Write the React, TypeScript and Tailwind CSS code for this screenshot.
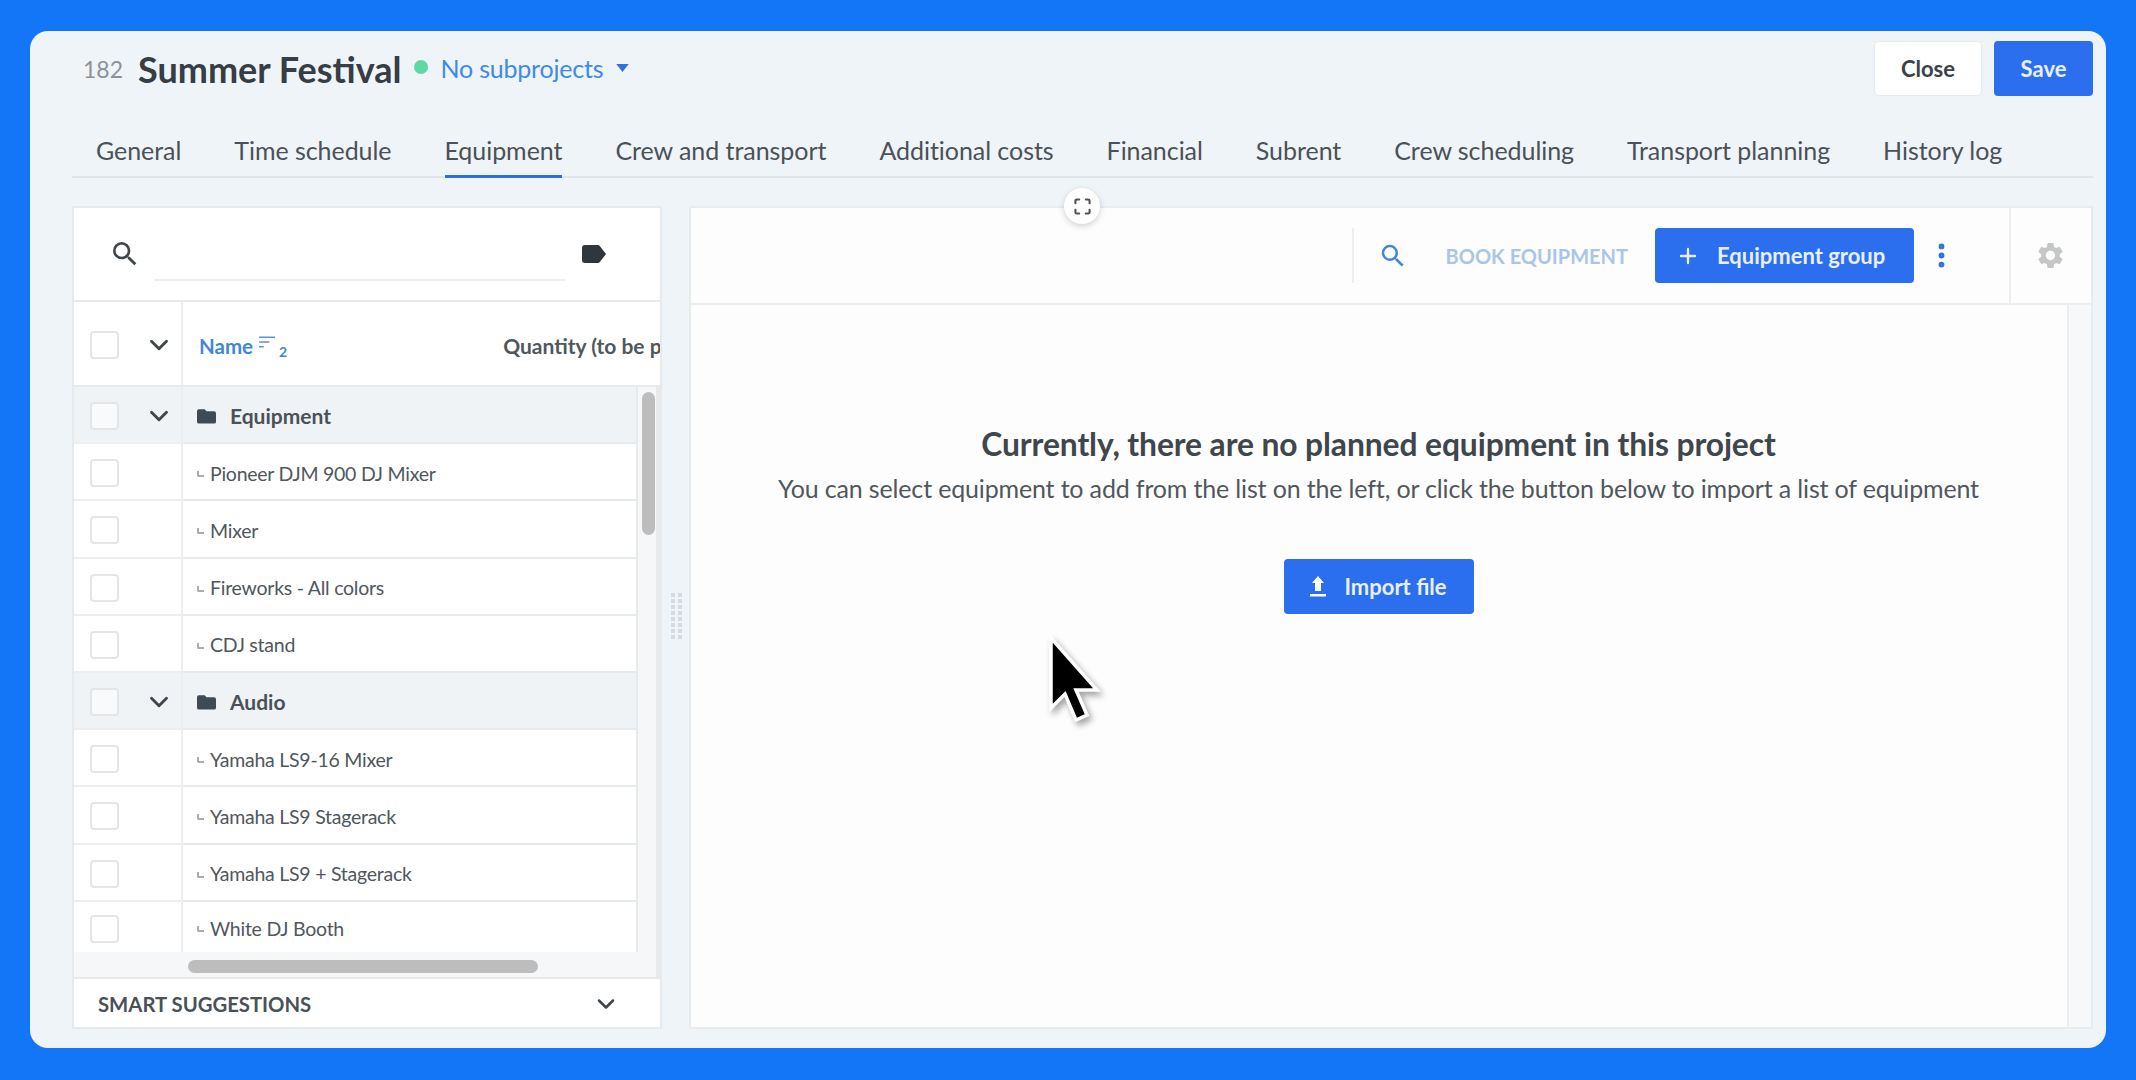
import React from "react";
import { ChevronDown, Plus, MoreVertical } from "lucide-react";
import { MdSearch, MdSettings } from "react-icons/md";

const font = { fontFamily: '"Lato", "Noto Sans", sans-serif' };

const tabs = [
  "General",
  "Time schedule",
  "Equipment",
  "Crew and transport",
  "Additional costs",
  "Financial",
  "Subrent",
  "Crew scheduling",
  "Transport planning",
  "History log",
];

const rows = [
  { name: "Equipment", group: true },
  { name: "Pioneer DJM 900 DJ Mixer" },
  { name: "Mixer" },
  { name: "Fireworks - All colors" },
  { name: "CDJ stand" },
  { name: "Audio", group: true },
  { name: "Yamaha LS9-16 Mixer" },
  { name: "Yamaha LS9 Stagerack" },
  { name: "Yamaha LS9 + Stagerack" },
  { name: "White DJ Booth", last: true },
];

const Check = () => (
  <span className="block h-[28px] w-[29px] rounded-[4px] border-2 border-[#e3e5e7] bg-white/60" />
);

const Folder = () => (
  <svg width="19" height="16" viewBox="0 0 20 16" className="shrink-0">
    <path d="M2 1h6l2 2h8a2 2 0 0 1 2 2v9a2 2 0 0 1-2 2H2a2 2 0 0 1-2-2V3a2 2 0 0 1 2-2z" fill="#3f4a54" />
  </svg>
);

const Tag = () => (
  <svg width="24" height="18" viewBox="0 0 24 18">
    <path d="M3 0h13a2 2 0 0 1 1.6.8L24 9l-6.4 8.2A2 2 0 0 1 16 18H3a3 3 0 0 1-3-3V3a3 3 0 0 1 3-3z" fill="#2f363d" />
  </svg>
);

const Upload = () => (
  <svg width="18" height="22" viewBox="0 0 18 22">
    <path d="M9 0l6 7h-3v8H6V7H3z" fill="#fff" />
    <rect x="1" y="18" width="16" height="2.5" fill="#fff" />
  </svg>
);

const Frame = () => (
  <svg width="17" height="17" viewBox="0 0 18 18" fill="none" stroke="#4b5258" strokeWidth="2.2" strokeLinecap="round">
    <path d="M1.5 5.5V3a1.5 1.5 0 0 1 1.5-1.5h2.5M12.5 1.5H15A1.5 1.5 0 0 1 16.5 3v2.5M16.5 12.5V15a1.5 1.5 0 0 1-1.5 1.5h-2.5M5.5 16.5H3A1.5 1.5 0 0 1 1.5 15v-2.5" />
  </svg>
);

const Cursor = () => (
  <svg width="54" height="88" viewBox="0 0 54 88" className="drop-shadow-[3px_4px_3px_rgba(0,0,0,0.35)]">
    <path d="M3 3v70l14-14 11 26 11-5-11-25h21z" fill="#000" stroke="#fff" strokeWidth="3.5" strokeLinejoin="miter" />
  </svg>
);

const Grip = () => (
  <div className="grid grid-cols-2 gap-x-[3px] gap-y-[2px]">
    {Array.from({ length: 16 }).map((_, i) => (
      <span key={i} className="h-[4px] w-[4px] bg-[#d5dbe0]" />
    ))}
  </div>
);

export default function App() {
  return (
    <div style={font} className="relative flex h-[1080px] w-[2136px] overflow-hidden bg-[#1276f7] pt-[31px] pr-[30px] pb-[32px] pl-[30px]">
      <div className="flex flex-1 flex-col rounded-[18px] bg-[#eff4f8] pr-[13px] pl-[42px]">
        {/* title */}
        <div className="flex h-[65px] items-end justify-between">
          <div className="flex items-center pb-[5px] pl-[11px]">
            <span className="text-[23px] text-[#8d9297]">182</span>
            <span className="ml-[15px] text-[36px] leading-[44px] font-bold text-[#363d44]">Summer Festival</span>
            <span className="mt-[-4px] ml-[13px] h-[14px] w-[14px] rounded-full bg-[#5fd8a6]" />
            <span className="ml-[12px] text-[25px] tracking-[-0.2px] text-[#3f8ae8]">No subprojects</span>
            <svg width="13" height="8" viewBox="0 0 14 9" className="mt-[-2px] ml-[13px]">
              <path d="M0 0h14L7 9z" fill="#2d73e0" />
            </svg>
          </div>
          <div className="flex items-center gap-[13px]">
            <button className="h-[53px] w-[106px] rounded-[4px] bg-white text-[22px] font-bold text-[#3b4249] shadow-[0_0_2px_rgba(0,0,0,0.12)]">Close</button>
            <button className="h-[55px] w-[99px] rounded-[4px] bg-[#2b6fee] text-[22px] font-bold text-[#e8f0ff]">Save</button>
          </div>
        </div>

        {/* tabs */}
        <div className="mt-[16px] flex h-[66px] gap-[53px] border-b-2 border-[#e1e5e9] pl-[24px]">
          {tabs.map((t) => (
            <div
              key={t}
              className={
                t === "Equipment"
                  ? "mb-[-2px] flex items-center whitespace-nowrap border-b-[3px] border-[#2a6fdb] pt-[14px] text-[25px] tracking-[-0.05px] text-[#4a5157]"
                  : "flex items-center whitespace-nowrap pt-[14px] text-[25px] tracking-[-0.05px] text-[#4a5157]"
              }
            >
              {t}
            </div>
          ))}
        </div>

        {/* panels */}
        <div className="mt-[28px] flex h-[823px] gap-[27px]">
          {/* left */}
          <div className="flex w-[590px] shrink-0 flex-col border-2 border-[#e7eaed] bg-white">
            <div className="flex h-[94px] shrink-0 items-center border-b-2 border-[#e7eaed] pl-[35px]">
              <MdSearch size={32} className="shrink-0 text-[#3f464c]" />
              <div className="ml-[13px] h-[73px] w-[411px] shrink-0 self-start border-b-2 border-[#eceef0]" />
              <div className="ml-[17px]">
                <Tag />
              </div>
            </div>
            <div className="flex h-[85px] shrink-0 items-center border-b-2 border-[#e7eaed]">
              <div className="flex h-full w-[109px] shrink-0 items-center justify-between border-r-2 border-[#eceef0] pt-[3px] pr-[7px] pl-[16px]">
                <Check />
                <ChevronDown size={30} strokeWidth={2.3} className="text-[#3f464c]" />
              </div>
              <div className="flex flex-1 items-center overflow-hidden pt-[5px] pl-[16px]">
                <span className="text-[20.5px] font-bold text-[#3f86dc]">Name</span>
                <svg width="17" height="12" viewBox="0 0 18 12" className="mb-[8px] ml-[6px] shrink-0" stroke="#5a93dc" strokeWidth="1.6">
                  <path d="M0 1h17M0 6h11M0 11h5" />
                </svg>
                <span className="mt-[10px] ml-[3px] text-[14px] font-bold text-[#3f86dc]">2</span>
                <span className="ml-[216px] text-[21px] font-bold whitespace-nowrap text-[#50575d]">Quantity (to be planned)</span>
              </div>
            </div>
            <div className="flex min-h-0 flex-1">
              <div className="flex min-w-0 flex-1 flex-col">
                <div className="min-h-0 flex-1 overflow-hidden">
                  {rows.map((r) => (
                    <div key={r.name} className={r.group ? "flex h-[57.2px] bg-[#f0f3f6]" : r.last ? "flex h-[52px]" : "flex h-[57.2px]"}>
                      <div className={r.last ? "flex w-[109px] shrink-0 items-center justify-between border-r-2 border-[#eceef0] pt-[3px] pr-[7px] pl-[16px]" : "flex w-[109px] shrink-0 items-center justify-between border-r-2 border-b-2 border-[#eceef0] pt-[3px] pr-[7px] pl-[16px]"}>
                        <Check />
                        {r.group && <ChevronDown size={30} strokeWidth={2.3} className="text-[#3f464c]" />}
                      </div>
                      <div className="flex min-w-0 flex-1 items-center border-r-2 border-b-2 border-[#e7eaed] pt-[3px] pl-[14px]">
                        {r.group ? (
                          <>
                            <Folder />
                            <span className="ml-[14px] text-[21px] font-bold text-[#4a5157]">{r.name}</span>
                          </>
                        ) : (
                          <>
                            <span className="mt-[2px] h-[6px] w-[7px] rounded-bl-[2px] border-b-2 border-l-2 border-[#a9aeb3]" />
                            <span className="ml-[6px] text-[19.5px] tracking-[-0.25px] text-[#50575d]">{r.name}</span>
                          </>
                        )}
                      </div>
                    </div>
                  ))}
                </div>
                <div className="flex h-[25px] shrink-0 items-center bg-[#f6f7f8] pt-[3px] pl-[114px]">
                  <span className="h-[13px] w-[350px] rounded-full bg-[#bdbdbd]" />
                </div>
              </div>
              <div className="flex w-[22px] shrink-0 justify-center border-r-4 border-[#e8e9ea] bg-[#f6f7f8] pt-[5px] pl-[2px]">
                <span className="h-[143px] w-[13px] rounded-full bg-[#bdbdbd]" />
              </div>
            </div>
            <div className="flex h-[50px] shrink-0 items-center justify-between border-t-2 border-[#e7eaed] pt-[2px] pr-[40px] pl-[24px]">
              <span className="text-[20.3px] font-bold text-[#4a5157]">SMART SUGGESTIONS</span>
              <ChevronDown size={28} strokeWidth={2.2} className="text-[#3f464c]" />
            </div>
          </div>

          {/* right */}
          <div className="flex min-w-0 flex-1 flex-col border-2 border-[#e9ecef] bg-[#fdfdfd]">
            <div className="flex h-[97px] shrink-0 items-center justify-end border-b-2 border-[#eceef0]">
              <div className="mr-[24px] h-[55px] w-[2px] bg-[#eceef0]" />
              <MdSearch size={30} className="text-[#3f86dc]" />
              <span className="ml-[38px] text-[20px] font-bold whitespace-nowrap text-[#a9c6ea]">BOOK EQUIPMENT</span>
              <button className="ml-[27px] flex h-[55px] w-[259px] items-center rounded-[4px] bg-[#2b6fee] pl-[21px] text-[22px] font-bold text-[#e8f0ff]">
                <Plus size={24} strokeWidth={2.4} />
                <span className="ml-[17px]">Equipment group</span>
              </button>
              <MoreVertical size={31} strokeWidth={2.5} className="ml-[12px] text-[#2d73e0]" />
              <div className="ml-[52px] flex h-full w-[82px] items-center justify-center border-l-2 border-[#eceef0] pr-[2px]">
                <MdSettings size={31} className="text-[#c4c6c8]" />
              </div>
            </div>
            <div className="flex min-h-0 flex-1">
              <div className="flex flex-1 flex-col items-center pt-[119px] pr-[1px]">
                <div className="text-[31.8px] leading-[40px] font-bold tracking-[-0.1px] whitespace-nowrap text-[#3f464c]">Currently, there are no planned equipment in this project</div>
                <div className="mt-[7px] text-[25px] leading-[34px] tracking-[-0.16px] whitespace-nowrap text-[#50575d]">You can select equipment to add from the list on the left, or click the button below to import a list of equipment</div>
                <button className="mt-[54px] flex h-[55px] w-[190px] items-center rounded-[4px] bg-[#2b6fee] pl-[25px] text-[22px] font-bold text-[#e8f0ff]">
                  <Upload />
                  <span className="ml-[18px]">Import file</span>
                </button>
              </div>
              <div className="w-[24px] shrink-0 border-l-2 border-[#eceef0] bg-[#f7f8f9]" />
            </div>
          </div>
        </div>
      </div>

      {/* overlays */}
      <div className="absolute top-[188px] left-[1064px] flex h-[36px] w-[36px] items-center justify-center rounded-full bg-white shadow-[0_2px_6px_rgba(0,0,0,0.18)]">
        <Frame />
      </div>
      <div className="absolute top-[593px] left-[671px]">
        <Grip />
      </div>
      <div className="absolute top-[635px] left-[1048px]">
        <Cursor />
      </div>
    </div>
  );
}
